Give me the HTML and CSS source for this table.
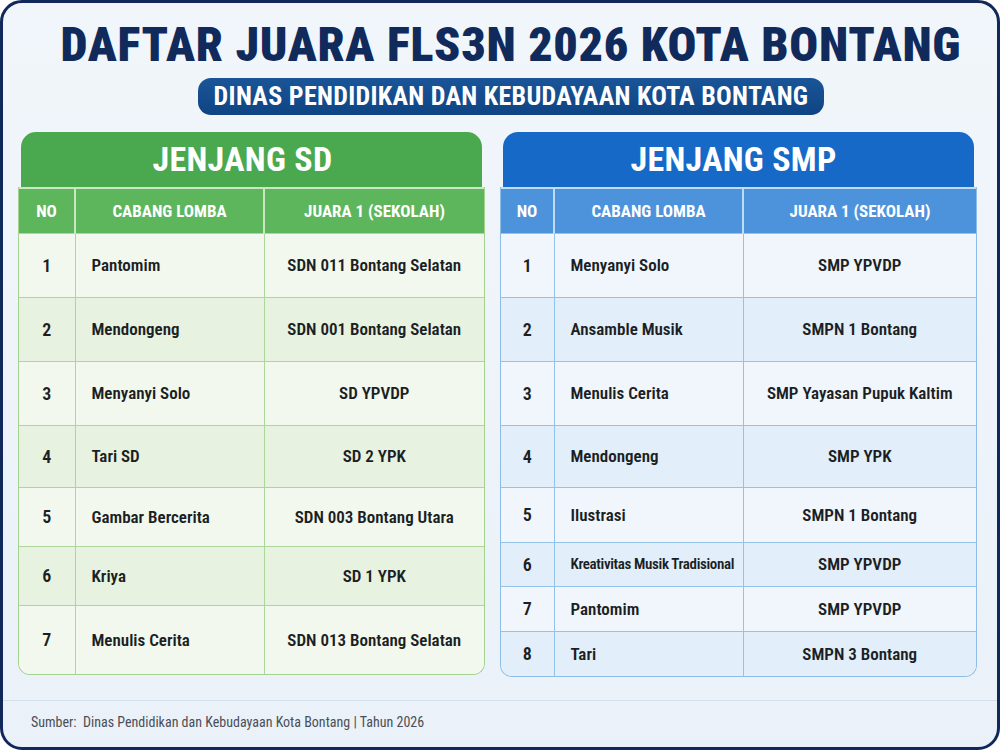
FILE: index.html
```html
<!DOCTYPE html>
<html lang="id">
<head>
<meta charset="utf-8">
<title>Daftar Juara FLS3N 2026 Kota Bontang</title>
<link rel="stylesheet" href="styles.css">
</head>
<body>
<div class="frame">
  <header class="top">
    <h1 class="title">DAFTAR JUARA FLS3N 2026 KOTA BONTANG</h1>
    <div class="pill">DINAS PENDIDIKAN DAN KEBUDAYAAN KOTA BONTANG</div>
  </header>

  <main class="panels">
    <section class="panel sd">
      <div class="panel-head">JENJANG SD</div>
      <div class="table-wrap">
        <table class="tbl">
          <colgroup><col class="c-no"><col class="c-cab"><col class="c-jua"></colgroup>
          <thead>
            <tr><th>NO</th><th>CABANG LOMBA</th><th>JUARA 1 (SEKOLAH)</th></tr>
          </thead>
          <tbody>
            <tr class="h64"><td class="no">1</td><td class="cab">Pantomim</td><td class="jua">SDN 011 Bontang Selatan</td></tr>
            <tr class="h64"><td class="no">2</td><td class="cab">Mendongeng</td><td class="jua">SDN 001 Bontang Selatan</td></tr>
            <tr class="h64"><td class="no">3</td><td class="cab">Menyanyi Solo</td><td class="jua">SD YPVDP</td></tr>
            <tr class="h62"><td class="no">4</td><td class="cab">Tari SD</td><td class="jua">SD 2 YPK</td></tr>
            <tr class="h59"><td class="no">5</td><td class="cab">Gambar Bercerita</td><td class="jua">SDN 003 Bontang Utara</td></tr>
            <tr class="h59"><td class="no">6</td><td class="cab">Kriya</td><td class="jua">SD 1 YPK</td></tr>
            <tr class="h69"><td class="no">7</td><td class="cab">Menulis Cerita</td><td class="jua">SDN 013 Bontang Selatan</td></tr>
          </tbody>
        </table>
      </div>
    </section>

    <section class="panel smp">
      <div class="panel-head">JENJANG SMP</div>
      <div class="table-wrap">
        <table class="tbl">
          <colgroup><col class="c-no"><col class="c-cab"><col class="c-jua"></colgroup>
          <thead>
            <tr><th>NO</th><th>CABANG LOMBA</th><th>JUARA 1 (SEKOLAH)</th></tr>
          </thead>
          <tbody>
            <tr class="h64"><td class="no">1</td><td class="cab">Menyanyi Solo</td><td class="jua">SMP YPVDP</td></tr>
            <tr class="h64"><td class="no">2</td><td class="cab">Ansamble Musik</td><td class="jua">SMPN 1 Bontang</td></tr>
            <tr class="h64"><td class="no">3</td><td class="cab">Menulis Cerita</td><td class="jua">SMP Yayasan Pupuk Kaltim</td></tr>
            <tr class="h62"><td class="no">4</td><td class="cab">Mendongeng</td><td class="jua">SMP YPK</td></tr>
            <tr class="h55"><td class="no">5</td><td class="cab">Ilustrasi</td><td class="jua">SMPN 1 Bontang</td></tr>
            <tr class="h44"><td class="no">6</td><td class="cab small">Kreativitas Musik Tradisional</td><td class="jua">SMP YPVDP</td></tr>
            <tr class="h45"><td class="no">7</td><td class="cab">Pantomim</td><td class="jua">SMP YPVDP</td></tr>
            <tr class="h45"><td class="no">8</td><td class="cab">Tari</td><td class="jua">SMPN 3 Bontang</td></tr>
          </tbody>
        </table>
      </div>
    </section>
  </main>

  <footer class="foot">Sumber:&nbsp; Dinas Pendidikan dan Kebudayaan Kota Bontang | Tahun 2026</footer>
</div>
</body>
</html>
```

FILE: styles.css
```css
* { box-sizing: border-box; }

html, body {
  margin: 0;
  padding: 0;
}

body {
  width: 1000px;
  height: 750px;
  background: #ffffff;
  font-family: "Roboto", "Open Sans", sans-serif;
  font-stretch: 75%;
}

.frame {
  width: 1000px;
  height: 750px;
  border: 3px solid #10295a;
  border-radius: 22px;
  background: linear-gradient(180deg, #f1f6fb 0%, #eaf1f8 100%);
  display: flex;
  flex-direction: column;
  overflow: hidden;
}

.top {
  display: flex;
  flex-direction: column;
  align-items: center;
  padding-left: 22px;
}

.title {
  margin: 14px 0 0;
  font-size: 48px;
  line-height: 56px;
  font-weight: 900;
  font-stretch: 87%;
  color: #112a5c;
  letter-spacing: 0.7px;
  white-space: nowrap;
}

.pill {
  margin-top: 5px;
  height: 37px;
  line-height: 37px;
  padding: 0 16px;
  border-radius: 13px;
  background: linear-gradient(180deg, #1a5598 0%, #0f4483 100%);
  color: #ffffff;
  font-size: 26px;
  font-weight: 700;
  letter-spacing: 0.3px;
  white-space: nowrap;
}

.panels {
  display: flex;
  gap: 15px;
  padding: 0 20px 0 15px;
  margin-top: 17px;
}

.panel {
  display: flex;
  flex-direction: column;
}

.sd { width: 467px; }
.smp { width: 477px; }

.panel-head {
  height: 55px;
  margin: 0 3px;
  border-radius: 15px 15px 0 0;
  color: #ffffff;
  font-size: 34px;
  font-weight: 700;
  line-height: 55px;
  text-align: center;
  letter-spacing: 0.3px;
}

.sd .panel-head { background: #4aa84e; padding-right: 18px; }
.smp .panel-head { background: #1769c8; padding-right: 10px; }

.table-wrap {
  border-radius: 0 0 12px 12px;
  overflow: hidden;
  border: 1.5px solid;
  border-top: 0;
}

.sd .table-wrap { border-color: #a3d291; }
.smp .table-wrap { border-color: #8dbde6; }

.tbl {
  width: 100%;
  border-collapse: collapse;
  table-layout: fixed;
}

.sd .c-no { width: 56px; }
.sd .c-cab { width: 189px; }
.smp .c-no { width: 53px; }
.smp .c-cab { width: 189px; }

.tbl th {
  height: 45px;
  color: #ffffff;
  font-size: 17px;
  font-weight: 700;
  text-align: center;
  padding: 0;
  border-right: 2px solid;
  border-top: 2px solid;
}

.tbl th:last-child { border-right: 0; }

.sd .tbl th { background: #5db65c; border-color: #c9e7c0; }
.smp .tbl th { background: #4d93dc; border-color: #bfdcf5; }

.tbl td {
  padding: 0;
  font-size: 17px;
  font-weight: 600;
  color: #1b1f24;
  border-right: 1.5px solid;
  border-top: 1.5px solid;
  vertical-align: middle;
}

.tbl td:last-child { border-right: 0; }

.sd .tbl td { border-color: #acd69c; }
.smp .tbl td { border-color: #94c2e8; }

.sd .tbl tbody tr:nth-child(odd) td { background: #f2f8ee; }
.sd .tbl tbody tr:nth-child(even) td { background: #e7f2e0; }
.smp .tbl tbody tr:nth-child(odd) td { background: #f0f6fc; }
.smp .tbl tbody tr:nth-child(even) td { background: #e2eef9; }

.tbl .no { text-align: center; font-size: 18px; }
.tbl .cab { padding-left: 16px; }
.tbl .jua { text-align: center; }
.tbl .small { font-size: 15px; letter-spacing: -0.35px; white-space: nowrap; }

.h64 td { height: 64px; }
.h62 td { height: 62px; }
.h59 td { height: 59px; }
.h55 td { height: 55px; }
.h69 td { height: 69px; }
.h45 td { height: 45px; }
.h44 td { height: 44px; }

.foot {
  margin-top: auto;
  height: 47px;
  border-top: 1px solid #d3dfea;
  padding-left: 28px;
  line-height: 42px;
  font-size: 14px;
  font-weight: 400;
  color: #4a4f57;
}
```
